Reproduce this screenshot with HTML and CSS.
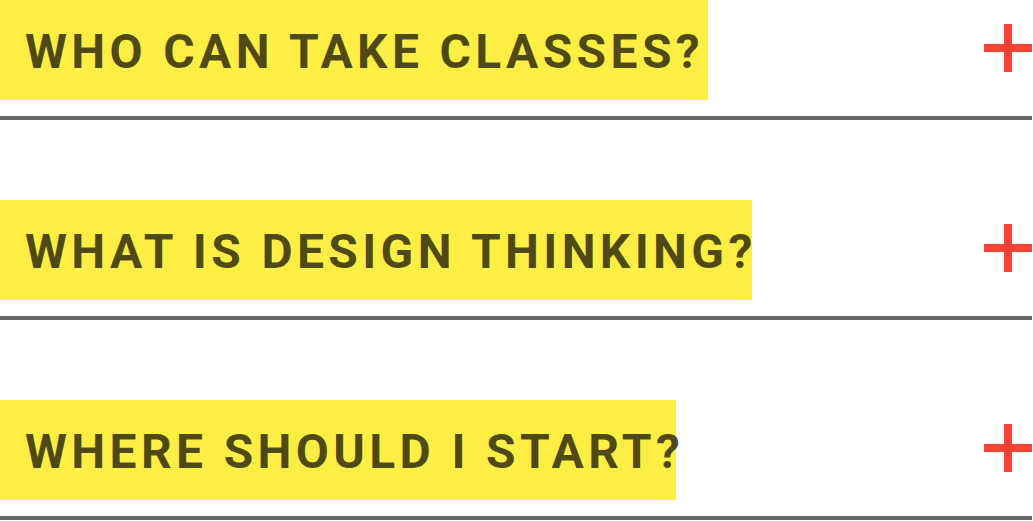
FILE: index.html
```html
<!DOCTYPE html>
<html lang="en">
<head>
    <meta charset="UTF-8">
    <meta name="viewport" content="width=device-width, initial-scale=1.0">
    <title>FAQ</title>
    <link rel="stylesheet" href="styles.css">
</head>
<body>
    <ul class="faq">
        <li class="faq-item">
            <div class="faq-head">
                <h3 class="faq-question faq-question--who">WHO CAN TAKE CLASSES?</h3>
                <svg class="faq-plus" width="48" height="48" viewBox="0 0 48 48"><path d="M20 0h8v20h20v8H28v20h-8V28H0v-8h20z"/></svg>
            </div>
        </li>
        <li class="faq-item">
            <div class="faq-head">
                <h3 class="faq-question faq-question--what">WHAT IS DESIGN THINKING?</h3>
                <svg class="faq-plus" width="48" height="48" viewBox="0 0 48 48"><path d="M20 0h8v20h20v8H28v20h-8V28H0v-8h20z"/></svg>
            </div>
        </li>
        <li class="faq-item">
            <div class="faq-head">
                <h3 class="faq-question faq-question--where">WHERE SHOULD I START?</h3>
                <svg class="faq-plus" width="48" height="48" viewBox="0 0 48 48"><path d="M20 0h8v20h20v8H28v20h-8V28H0v-8h20z"/></svg>
            </div>
        </li>
    </ul>
</body>
</html>
```

FILE: styles.css
```css
* {
    box-sizing: border-box;
}
body {
    margin: 0;
    background-color: #ffffff;
    font-family: Roboto, "Liberation Sans", sans-serif;
}
.faq {
    list-style: none;
    margin: 0;
    padding: 0;
    width: 1032px;
}
.faq-item {
    padding-bottom: 16px;
    border-bottom: 4px solid #666666;
    margin-bottom: 80px;
}
.faq-item:last-child {
    margin-bottom: 0;
}
.faq-head {
    display: flex;
    justify-content: space-between;
    align-items: center;
}
.faq-question {
    display: flex;
    align-items: center;
    height: 100px;
    margin: 0;
    padding-left: 25px;
    padding-top: 2px;
    background-color: #ffef44;
    color: rgba(0, 0, 0, 0.7);
    font-size: 48px;
    font-weight: 700;
    letter-spacing: 4.35px;
    white-space: nowrap;
}
/* the yellow boxes don't follow the text width exactly */
.faq-question--who {
    width: 708px;
}
.faq-question--what {
    width: 752px;
}
.faq-question--where {
    width: 676px;
}
.faq-plus {
    flex: none;
    margin-bottom: 4px;
    fill: #f44336;
}
```
